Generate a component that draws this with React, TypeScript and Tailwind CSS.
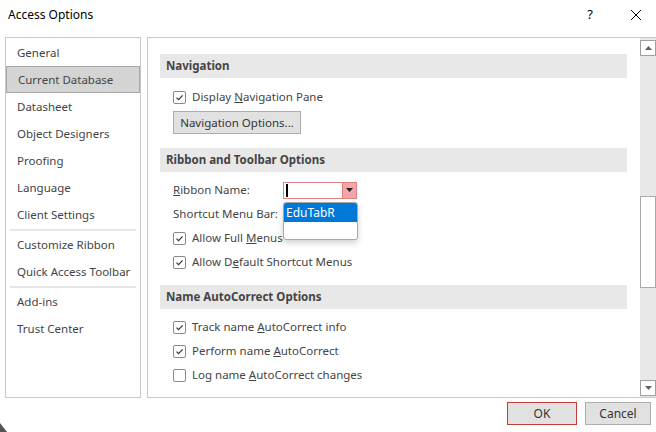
import React from "react";

const Check = ({ checked }: { checked: boolean }) => (
  <div className="w-[13px] h-[13px] rounded-[2px] border border-[#8a8a8a] bg-white flex items-center justify-center shrink-0">
    {checked && (
      <svg width="9" height="9" viewBox="0 0 9 9">
        <path d="M1.5 4.6 L3.6 6.6 L7.6 2.4" fill="none" stroke="#333" strokeWidth="1.2" />
      </svg>
    )}
  </div>
);

const CheckRow = ({ checked, children }: { checked: boolean; children: React.ReactNode }) => (
  <div className="h-[24px] flex items-center pl-[25px] gap-[6px]">
    <Check checked={checked} />
    <span>{children}</span>
  </div>
);

const Header = ({ children }: { children: React.ReactNode }) => (
  <div className="h-[24px] ml-[12px] mr-[13px] bg-[#e8e8e8] flex items-center pl-[6px] font-bold text-[#444]">
    {children}
  </div>
);

const NavItem = ({ label, selected }: { label: string; selected?: boolean }) => (
  <div
    className={
      "h-[27px] flex items-center pl-[11px] text-[#444] " +
      (selected ? "bg-[#d4d4d4] border border-[#a8a8a8] pl-[10px] text-[#222]" : "")
    }
  >
    {label}
  </div>
);

const Sep = () => (
  <div className="h-[3px] flex items-center px-[4px]">
    <div className="h-[2px] w-full bg-[#e6e6e6]" />
  </div>
);

export default function App() {
  return (
    <div
      className="w-[656px] h-[432px] bg-white relative overflow-hidden text-[11.5px] text-[#444] flex flex-col"
      style={{ fontFamily: '"Noto Sans", "Open Sans", sans-serif' }}
    >
      {/* Title bar */}
      <div className="h-[30px] flex items-center pl-[8px] shrink-0">
        <span className="text-[12px] text-black">Access Options</span>
        <div className="flex-1" />
        <span className="text-[13px] text-black mr-[37px]">?</span>
        <svg width="12" height="12" viewBox="0 0 12 12" className="mr-[14px]">
          <path d="M1 1 L11 11 M11 1 L1 11" stroke="#000" strokeWidth="1" />
        </svg>
      </div>

      {/* Body */}
      <div className="flex mt-[7px] h-[361px] shrink-0">
        <div className="ml-[5px] w-[136px] border border-[#c8c8c8] pt-[1px]">
          <NavItem label="General" />
          <NavItem label="Current Database" selected />
          <NavItem label="Datasheet" />
          <NavItem label="Object Designers" />
          <NavItem label="Proofing" />
          <NavItem label="Language" />
          <NavItem label="Client Settings" />
          <Sep />
          <NavItem label="Customize Ribbon" />
          <NavItem label="Quick Access Toolbar" />
          <Sep />
          <NavItem label="Add-ins" />
          <NavItem label="Trust Center" />
        </div>

        <div className="ml-[6px] flex-1 border-t border-b border-l border-[#c8c8c8] flex relative">
          <div className="flex-1 pt-[16px]">
            <Header>Navigation</Header>
            <div className="mt-[7px]">
              <CheckRow checked>
                Display <u>N</u>avigation Pane
              </CheckRow>
            </div>
            <div className="mt-[2px] ml-[25px] w-[128px] h-[23px] bg-[#e1e1e1] border border-[#adadad] flex items-center justify-center text-[#333]">
              Navigation Options...
            </div>

            <div className="mt-[14px]">
              <Header>Ribbon and Toolbar Options</Header>
            </div>
            <div className="mt-[6px] h-[24px] flex items-center pl-[25px]">
              <span className="w-[110px]">
                <u>R</u>ibbon Name:
              </span>
              <div className="w-[74px] h-[17px] border border-[#e08080] bg-white flex">
                <div className="flex-1 flex items-center pl-[2px]">
                  <div className="w-[1.5px] h-[13px] bg-black" />
                </div>
                <div className="w-[14px] h-full bg-[#f4a6a6] border-l border-[#e08080] flex items-center justify-center">
                  <svg width="7" height="4" viewBox="0 0 7 4">
                    <path d="M0 0 L7 0 L3.5 4 Z" fill="#222" />
                  </svg>
                </div>
              </div>
            </div>
            <div className="h-[24px] flex items-center pl-[25px]">Shortcut Menu Bar:</div>
            <CheckRow checked>
              Allow Full <u>M</u>enus
            </CheckRow>
            <CheckRow checked>
              Allow D<u>e</u>fault Shortcut Menus
            </CheckRow>

            <div className="mt-[11px]">
              <Header>Name AutoCorrect Options</Header>
            </div>
            <div className="mt-[6px]">
              <CheckRow checked>
                Track name <u>A</u>utoCorrect info
              </CheckRow>
              <CheckRow checked>
                Perform name <u>A</u>utoCorrect
              </CheckRow>
              <CheckRow checked={false}>
                Log name <u>A</u>utoCorrect changes
              </CheckRow>
            </div>

            {/* Dropdown list overlay */}
            <div className="absolute left-[135px] top-[164px] w-[75px] h-[38px] bg-white border border-[#a8a8a8] rounded-[3px] shadow-[0_3px_6px_rgba(0,0,0,0.18)] overflow-hidden">
              <div className="h-[19px] bg-[#0078d7] text-white flex items-center pl-[2px] text-[12px]">EduTabR</div>
            </div>
          </div>

          {/* Scrollbar */}
          <div className="w-[16px] bg-[#e8e8e8] flex flex-col pt-[2px] pb-[1px]">
            <div className="h-[16px] bg-white border border-[#a0a0a0] flex items-center justify-center">
              <svg width="7" height="4" viewBox="0 0 7 4">
                <path d="M0 4 L7 4 L3.5 0 Z" fill="#606060" />
              </svg>
            </div>
            <div className="h-[140px]" />
            <div className="h-[92px] bg-white border border-[#a8a8a8]" />
            <div className="flex-1" />
            <div className="h-[16px] bg-white border border-[#a0a0a0] flex items-center justify-center">
              <svg width="7" height="4" viewBox="0 0 7 4">
                <path d="M0 0 L7 0 L3.5 4 Z" fill="#606060" />
              </svg>
            </div>
          </div>
        </div>
      </div>

      {/* Footer */}
      <div className="flex justify-end mt-[4px] pr-[5px] gap-[8px]">
        <div className="w-[70px] h-[23px] bg-[#e1e1e1] border border-[#c43c3c] flex items-center justify-center text-[#333] text-[12px]">
          OK
        </div>
        <div className="w-[66px] h-[23px] bg-[#e1e1e1] border border-[#adadad] flex items-center justify-center text-[#333] text-[12px]">
          Cancel
        </div>
      </div>

      <svg className="absolute left-0 bottom-0" width="7" height="9" viewBox="0 0 7 9">
        <path d="M0 0 L0 9 L7 9 Z" fill="#555" />
      </svg>
    </div>
  );
}
